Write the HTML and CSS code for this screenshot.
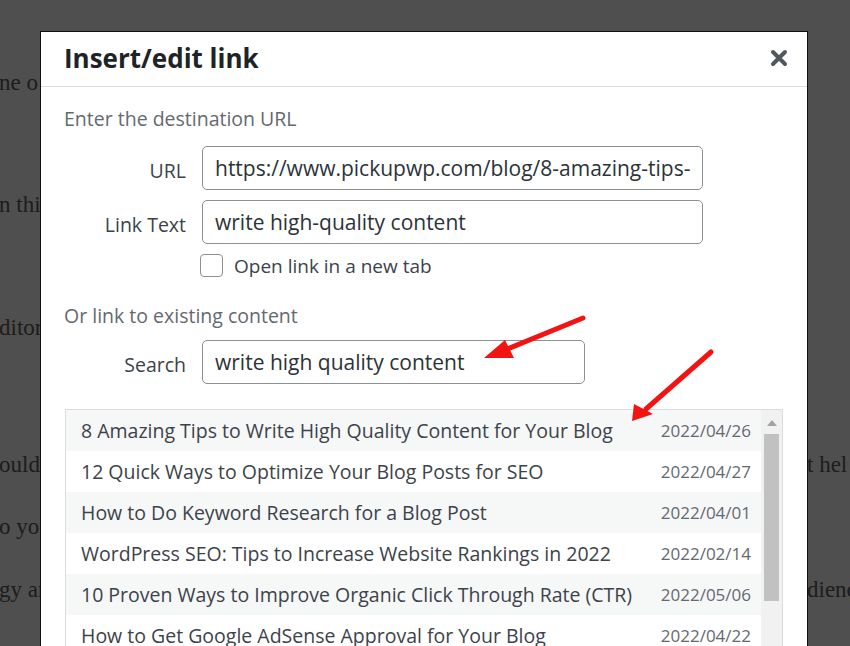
FILE: index.html
```html
<!DOCTYPE html>
<html>
<head>
<meta charset="utf-8">
<link rel="stylesheet" href="styles.css">
</head>
<body>
<div class="page">
  <div class="line l1"><span class="lf">ne o</span></div>
  <div class="line l2"><span class="lf">n this</span></div>
  <div class="line l3"><span class="lf">ditor</span></div>
  <div class="line l4"><span class="lf">ould</span><span class="rt">t hel</span></div>
  <div class="line l5"><span class="lf">o you</span></div>
  <div class="line l6"><span class="lf">gy an</span><span class="rt">dienc</span></div>
</div>

<div class="modal">
  <div class="modal-head">
    <h1 class="title">Insert/edit link</h1>
    <svg class="close" width="18" height="18" viewBox="0 0 18 18"><path d="M3 3 L15 15 M15 3 L3 15" stroke="#50575e" stroke-width="4" stroke-linecap="round"/></svg>
  </div>
  <div class="modal-body">
    <p class="hint">Enter the destination URL</p>
    <div class="field">
      <label class="lbl">URL</label>
      <div class="input wide">https://www.pickupwp.com/blog/8-amazing-tips-</div>
    </div>
    <div class="field">
      <label class="lbl">Link Text</label>
      <div class="input wide">write high-quality content</div>
    </div>
    <div class="check-row">
      <span class="checkbox"></span>
      <span class="check-label">Open link in a new tab</span>
    </div>
    <p class="hint hint2">Or link to existing content</p>
    <div class="field">
      <label class="lbl">Search</label>
      <div class="input narrow">write high quality content</div>
    </div>
    <div class="results">
      <ul class="list">
        <li class="row alt"><span class="t">8 Amazing Tips to Write High Quality Content for Your Blog</span><span class="d">2022/04/26</span></li>
        <li class="row"><span class="t">12 Quick Ways to Optimize Your Blog Posts for SEO</span><span class="d">2022/04/27</span></li>
        <li class="row alt"><span class="t">How to Do Keyword Research for a Blog Post</span><span class="d">2022/04/01</span></li>
        <li class="row"><span class="t">WordPress SEO: Tips to Increase Website Rankings in 2022</span><span class="d">2022/02/14</span></li>
        <li class="row alt"><span class="t">10 Proven Ways to Improve Organic Click Through Rate (CTR)</span><span class="d">2022/05/06</span></li>
        <li class="row"><span class="t">How to Get Google AdSense Approval for Your Blog</span><span class="d">2022/04/22</span></li>
      </ul>
      <div class="scrollbar">
        <svg class="up" width="10" height="6" viewBox="0 0 10 6"><path d="M0 6 L5 0 L10 6 Z" fill="#a3a3a3"/></svg>
        <div class="thumb"></div>
      </div>
    </div>
  </div>
</div>

<svg class="arrows" width="850" height="646" viewBox="0 0 850 646">
  <line x1="583" y1="318" x2="505" y2="350" stroke="#f21313" stroke-width="5" stroke-linecap="round"/>
  <polygon points="484,358 505,340 514,358" fill="#f21313"/>
  <line x1="711" y1="352" x2="646" y2="409" stroke="#f21313" stroke-width="5" stroke-linecap="round"/>
  <polygon points="632,421 634,404 653,414" fill="#f21313"/>
</svg>
</body>
</html>
```
FILE: styles.css
```css
html, body {
  margin: 0;
  padding: 0;
}
body {
  width: 850px;
  height: 646px;
  overflow: hidden;
  background: #4f4f4f;
  position: relative;
  font-family: "Open Sans", "Noto Sans", sans-serif;
}
.page {
  font-family: "Liberation Serif", serif;
  font-size: 23px;
  color: #1c1c1c;
  padding-top: 70px;
}
.line {
  display: flex;
  height: 26px;
  line-height: 26px;
  white-space: nowrap;
}
.lf {
  flex-shrink: 0;
  width: 805px;
  margin-left: -1px;
}
.rt {
  flex-shrink: 0;
  margin-left: 3px;
}
.l2 { margin-top: 96px; }
.l3 { margin-top: 97px; }
.l4 { margin-top: 111px; }
.l5 { margin-top: 36px; }
.l6 { margin-top: 37px; }

.modal {
  position: absolute;
  left: 41px;
  top: 32px;
  width: 766px;
  height: 640px;
  background: #fff;
  box-shadow: 0 0 0 1px #111;
}
.modal-head {
  height: 54px;
  border-bottom: 1px solid #dcdcde;
  display: flex;
  align-items: center;
  justify-content: space-between;
  padding: 0 19px 0 23px;
}
.title {
  margin: 0 0 3px 0;
  font-size: 26px;
  font-weight: 700;
  color: #1d2327;
}
.close {
  margin-bottom: 3px;
}
.modal-body {
  padding: 20px 23px 0 23px;
  color: #3c434a;
}
.hint {
  margin: 0 0 15px 0;
  font-size: 19.5px;
  line-height: 24px;
  color: #646970;
}
.hint2 {
  margin-top: 27px;
  margin-bottom: 12px;
}
.field {
  display: flex;
  align-items: center;
  gap: 16px;
  margin-bottom: 10px;
}
.lbl {
  width: 122px;
  text-align: right;
  font-size: 19.5px;
  color: #3c434a;
  padding-top: 4px;
}
.input {
  height: 42px;
  border: 1px solid #8c8f94;
  border-radius: 5px;
  box-sizing: content-box;
  padding: 0 12px;
  font-size: 21px;
  line-height: 42px;
  color: #2c3338;
  white-space: nowrap;
  overflow: hidden;
}
.wide { width: 475px; }
.narrow { width: 357px; }
.check-row {
  display: flex;
  align-items: center;
  gap: 11px;
  padding-left: 136px;
  height: 23px;
}
.checkbox {
  width: 21px;
  height: 21px;
  border: 1px solid #8c8f94;
  border-radius: 4px;
}
.check-label {
  font-size: 19px;
  color: #3c434a;
}
.results {
  margin-top: 25px;
  margin-left: 1px;
  width: 716px;
  height: 260px;
  border: 1px solid #dcdcde;
  background: #f6f7f7;
  display: flex;
}
.list {
  list-style: none;
  margin: 0;
  padding: 0;
  width: 695px;
}
.row {
  height: 41px;
  display: flex;
  align-items: center;
  justify-content: space-between;
  padding: 0 10px 0 15px;
  background: #fff;
  font-size: 19.5px;
  white-space: nowrap;
}
.row.alt {
  background: #f6f7f7;
}
.t {
  color: #3c434a;
}
.d {
  color: #646970;
  font-size: 17px;
}
.scrollbar {
  width: 21px;
  background: #f1f1f1;
  display: flex;
  flex-direction: column;
  align-items: center;
  padding-top: 10px;
}
.up {
  display: block;
}
.thumb {
  margin-top: 8px;
  width: 15px;
  height: 167px;
  background: #c1c1c1;
}
.arrows {
  position: absolute;
  left: 0;
  top: 0;
  pointer-events: none;
}
```
